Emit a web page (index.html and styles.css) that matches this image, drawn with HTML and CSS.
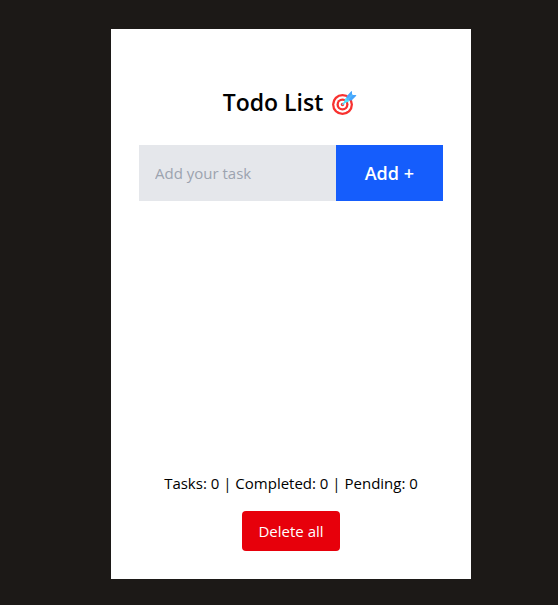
FILE: index.html
```html
<!DOCTYPE html>
<html lang="en">
<head>
<meta charset="utf-8">
<meta name="viewport" content="width=device-width, initial-scale=1">
<title>Todo List</title>
<link rel="stylesheet" href="styles.css">
</head>
<body>
<main class="card">
  <header class="header">
    <h1 class="title">Todo List</h1>
    <svg class="target" viewBox="0 -2 28 28" aria-hidden="true">
      <circle cx="11.500" cy="14.500" r="10.500" fill="#f8312f"/>
      <circle cx="11.500" cy="14.500" r="8.200" fill="#fff"/>
      <circle cx="11.500" cy="14.500" r="6" fill="#f8312f"/>
      <circle cx="11.500" cy="14.500" r="3.700" fill="#fff"/>
      <circle cx="11.500" cy="14.500" r="1.700" fill="#f8312f"/>
      <path d="M11.800 14.200 17 9" stroke="#50e2ff" stroke-width="1.600" stroke-linecap="round"/>
      <path d="M15.500 10.500V6.500L20 1.500q1-1 1 .500V5h3.500q1.500 0 .500 1L20.500 10.500Z" fill="#46a4fb"/>
      <path d="M12.500 13.500 14 9q.500-1.500 2-1l2 2q.500 1.500-1 2Z" fill="#50e2ff"/>
      <path d="M16 10 21.500 4.500" stroke="#50b8ff" stroke-width="1.600"/>
    </svg>
  </header>
  <form class="entry">
    <input class="entry-input" type="text" placeholder="Add your task" aria-label="Add your task">
    <button class="entry-button" type="button">Add +</button>
  </form>
  <footer class="footer">
    <p class="stats">Tasks: 0 | Completed: 0 | Pending: 0</p>
    <button class="delete" type="button">Delete all</button>
  </footer>
</main>
</body>
</html>
```
FILE: styles.css
```css
* {
  box-sizing: border-box;
}

body {
  display: grid;
  place-items: center;
  min-height: 100vh;
  margin: 0;
  padding: 2px 0 0 24px;
  background: #1c1917;
  color: #000;
  font: 15px/24px "Segoe UI", "Open Sans", "Noto Sans", sans-serif;
}

.card {
  display: flex;
  flex-direction: column;
  width: 100%;
  max-width: 360px;
  min-height: 550px;
  padding: 28px;
  background: #fff;
}

.header {
  display: flex;
  justify-content: center;
  align-items: center;
  gap: 8px;
  margin: 27px 0 25px;
}

.title {
  margin: 0;
  font-size: 23px;
  font-weight: 600;
  line-height: 36px;
}

.target {
  width: 28px;
  height: 28px;
  fill: none;
}

.entry {
  display: flex;
  height: 56px;
}

.entry-input {
  flex: 1;
  min-width: 0;
  padding: 0 16px;
  border: 0;
  border-radius: 0;
  background: #e5e7eb;
  color: inherit;
  font: inherit;
}

.entry-input::placeholder {
  color: #9ca3af;
  opacity: 1;
}

.entry-button {
  padding: 0 29px;
  border: 0;
  background: #155dfc;
  color: #fff;
  font: inherit;
  font-size: 18px;
  font-weight: 600;
}

.footer {
  display: flex;
  flex-direction: column;
  align-items: center;
  gap: 16px;
  margin-top: auto;
}

.stats {
  margin: 0;
}

.delete {
  padding: 8px 16px;
  border: 0;
  border-radius: 4px;
  background: #e7000b;
  color: #fff;
  font: inherit;
}
```
